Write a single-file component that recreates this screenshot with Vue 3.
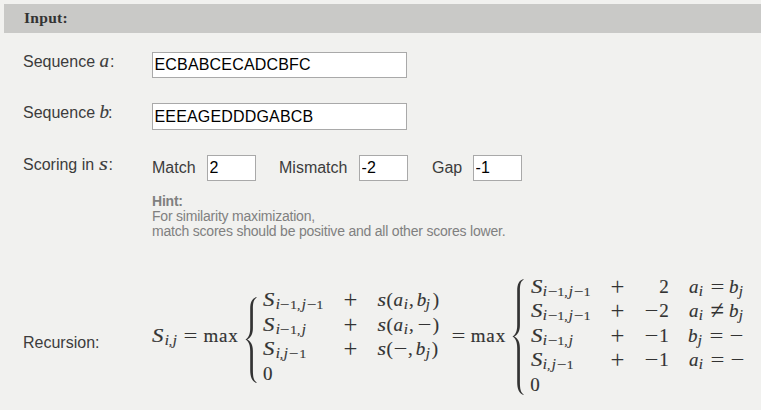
<script setup>
import { ref } from 'vue'

const seqA = ref('ECBABCECADCBFC')
const seqB = ref('EEEAGEDDDGABCB')
const scores = ref([
  { label: 'Match', value: '2', cls: 'match' },
  { label: 'Mismatch', value: '-2', cls: 'mismatch' },
  { label: 'Gap', value: '-1', cls: 'gap' },
])

const names = {
  '+': 'plus', '−': 'minus', '=': 'equals', '≠': 'equals', ',': 'comma',
  '(': 'paren', ')': 'paren', S: 'cap', a: 'a', b: 'b', i: 'i', j: 'j', s: 's',
}

// Splits e.g. "S_{i,j}" into glyphs, marking those inside braces as subscripts.
function glyphs(source) {
  const out = []
  let sub = false
  for (const ch of source) {
    if (ch === '_') continue
    if (ch === '{') sub = true
    else if (ch === '}') {
      sub = false
      out[out.length - 1].cls.push('end')
    } else {
      out.push({ ch, cls: [names[ch] || 'digit', { sub, italic: /[Sabijs]/.test(ch), not: ch === '≠' }] })
    }
  }
  return out
}

const general = [
  ['S_{i−1,j−1}', '+', 's(a_{i},b_{j})'],
  ['S_{i−1,j}', '+', 's(a_{i},−)'],
  ['S_{i,j−1}', '+', 's(−,b_{j})'],
  ['0', '', ''],
].map((row) => row.map(glyphs))

const concrete = [
  ['S_{i−1,j−1}', '+', '2', 'a_{i}=b_{j}'],
  ['S_{i−1,j−1}', '+', '−2', 'a_{i}≠b_{j}'],
  ['S_{i−1,j}', '+', '−1', 'b_{j}=−'],
  ['S_{i,j−1}', '+', '−1', 'a_{i}=−'],
  ['0', '', '', ''],
].map((row) => row.map(glyphs))

const lhs = glyphs('S_{i,j}')
</script>

<template>
  <main class="page">
    <header class="bar">Input:</header>
    <section class="row first">
      <label class="label">Sequence <span class="var va">a</span>:</label>
      <input v-model="seqA" class="field long" />
    </section>
    <section class="row second">
      <label class="label">Sequence <span class="var vb">b</span>:</label>
      <input v-model="seqB" class="field long tall" />
    </section>
    <section class="row third">
      <span class="label">Scoring in <span class="var vs">s</span>:</span>
      <div>
        <div class="scores">
          <label v-for="s in scores" :key="s.label" class="score" :class="s.cls">
            <span class="name">{{ s.label }}</span>
            <input v-model="s.value" class="field short" />
          </label>
        </div>
        <p class="hint">
          <b>Hint:</b><br />For similarity maximization,<br />match scores should be positive and all other scores lower.
        </p>
      </div>
    </section>
    <section class="row recursion">
      <span class="label rec">Recursion:</span>
      <div class="formula">
        <span class="expr lhs"><span v-for="(g, k) in lhs" :key="k" class="g" :class="g.cls"><span class="ink">{{ g.ch }}</span></span></span>
        <span class="g equals main-eq"><span class="ink">=</span></span>
        <span class="max">max</span>
        <svg class="brace small" width="12" height="88" viewBox="0 0 12 88">
          <path d="M11.5 1C7 2.5 5.2 6 5.2 13V32C5.2 38 3.8 41.5 .5 43.5C3.8 45.5 5.2 49 5.2 55V74C5.2 81 7 85.5 11.5 87L11.5 86.2C8.7 84.5 7.9 81 7.9 74V55C7.9 49 6 45.5 2.2 43.5C6 41.5 7.9 38 7.9 32V13C7.9 6.5 8.7 3.5 11.5 1.8Z" />
        </svg>
        <div class="cases general">
          <template v-for="(row, r) in general" :key="r">
            <span v-for="(cell, c) in row" :key="c" class="expr"><span v-for="(g, k) in cell" :key="k" class="g" :class="g.cls"><span class="ink">{{ g.ch }}</span></span></span>
          </template>
        </div>
        <span class="g equals mid-eq"><span class="ink">=</span></span>
        <span class="max">max</span>
        <svg class="brace big" width="12" height="118" viewBox="0 0 12 118">
          <path d="M11.5 1C7 2.5 5.2 6 5.2 13V47C5.2 53 3.8 56.5 .5 58.5C3.8 60.5 5.2 64 5.2 70V104C5.2 111 7 115.5 11.5 117L11.5 116.2C8.7 114.5 7.9 111 7.9 104V70C7.9 64 6 60.5 2.2 58.5C6 56.5 7.9 53 7.9 47V13C7.9 6.5 8.7 3.5 11.5 1.8Z" />
        </svg>
        <div class="cases concrete">
          <template v-for="(row, r) in concrete" :key="r">
            <span v-for="(cell, c) in row" :key="c" class="expr" :class="{ right: c === 2 }"><span v-for="(g, k) in cell" :key="k" class="g" :class="g.cls"><span class="ink">{{ g.ch }}</span></span></span>
          </template>
        </div>
      </div>
    </section>
  </main>
</template>

<style>
body {
  background: #f1f1ef;
}
</style>

<style scoped>
.page {
  box-sizing: border-box;
  width: 761px;
  height: 410px;
  padding: 4px 0 0 4px;
  overflow: hidden;
  background: #f1f1ef;
  color: #3c3c3c;
  font: 16px/20px "Liberation Sans", Arial, sans-serif;
}
.bar {
  box-sizing: border-box;
  height: 29px;
  padding-left: 20px;
  background: #c9c9c7;
  color: #333;
  font: bold 15.5px/28px "Liberation Serif", serif;
  letter-spacing: 0.3px;
}
.row {
  display: flex;
  align-items: flex-start;
  padding-left: 19px;
}
.first {
  height: 51px;
  padding-top: 19px;
}
.second {
  height: 52px;
}
.third {
  height: 119px;
}
.label {
  flex: none;
  width: 129px;
  white-space: pre;
}
.var {
  display: inline-block;
  font: italic 19px/16px "Liberation Serif", serif;
  -webkit-text-stroke: 0.15px currentColor;
}
.va { width: 10.5px; }
.vb { width: 8.5px; }
.vs {
  width: 9px;
  transform: scaleX(1.2);
  transform-origin: left;
  margin-right: 1px;
}
.field {
  box-sizing: border-box;
  height: 26px;
  margin: 0;
  padding: 0 2px 0 1.5px;
  border: 1px solid #a9a9a9;
  border-radius: 0;
  background: #fff;
  color: #000;
  font: 16px "Liberation Sans", Arial, sans-serif;
  letter-spacing: 0.17px;
  outline: none;
}
.long {
  width: 255px;
}
.tall {
  height: 27px;
}
.short {
  width: 49px;
}
.scores {
  display: flex;
}
.score {
  display: flex;
  line-height: 26px;
}
.match .name { width: 55px; }
.mismatch .name { width: 80px; }
.gap .name { width: 41px; }
.mismatch { margin-left: 23px; }
.gap { margin-left: 24px; }
.hint {
  margin: 13px 0 0;
  color: #808080;
  font-size: 14px;
  line-height: 15px;
  letter-spacing: -0.21px;
}
.rec {
  padding-top: 58.5px;
}
.formula {
  display: flex;
  align-items: center;
  height: 126px;
  color: #333;
  font: 19px/24.5px "Liberation Serif", serif;
  -webkit-text-stroke: 0.15px currentColor;
}
.expr {
  display: inline-flex;
  align-items: baseline;
  height: 24.5px;
  white-space: nowrap;
}
.right {
  justify-content: flex-end;
}
.g {
  display: inline-flex;
  flex: none;
  justify-content: center;
}
.ink {
  display: inline-block;
}
.italic { font-style: italic; }
.sub {
  font-size: 13.4px;
  transform: translateY(3px);
}
.sub.i .ink, .sub.j .ink {
  transform: scale(1.12);
}
.end { margin-right: 0.08em; }
.cap { width: 0.645em; }
.cap .ink { transform: scaleX(1.2); }
.a { width: 0.529em; }
.b { width: 0.429em; }
.i { width: 0.345em; }
.j { width: 0.412em; }
.s { width: 0.469em; }
.s .ink { transform: scaleX(1.15); }
.digit { width: 0.5em; }
.paren { width: 0.389em; }
.comma { width: 0.445em; justify-content: flex-start; }
.comma.sub { width: 0.278em; }
.plus, .minus, .equals { width: 0.778em; }
.plus .ink, .minus .ink, .equals .ink {
  -webkit-text-stroke-width: 0;
}
.plus .ink { transform: scale(1.3); }
.minus .ink, .equals .ink { transform: scaleX(1.3); }
.not .ink { transform: scale(1.3, 1.4); }
.expr .equals { margin: 0 0.278em; }
.lhs { margin-bottom: 1px; }
.main-eq { margin: 0 5.5px 1px 4px; }
.mid-eq { margin: 0 5px 1px 0; }
.max {
  width: 36px;
  margin-bottom: 1px;
  letter-spacing: 0.85px;
}
.brace {
  flex: none;
  margin-left: 5.5px;
  fill: #333;
}
.small { margin-top: 5px; }
.cases {
  display: grid;
  flex: none;
  grid-auto-rows: 24.5px;
  margin-left: 6px;
}
.general {
  grid-template-columns: 80px 34px 74px;
}
.concrete {
  grid-template-columns: 80px 34px 24.5px 60px;
  margin-bottom: 2px;
}
.concrete .expr:nth-child(4n) {
  margin-left: 20px;
}
</style>
